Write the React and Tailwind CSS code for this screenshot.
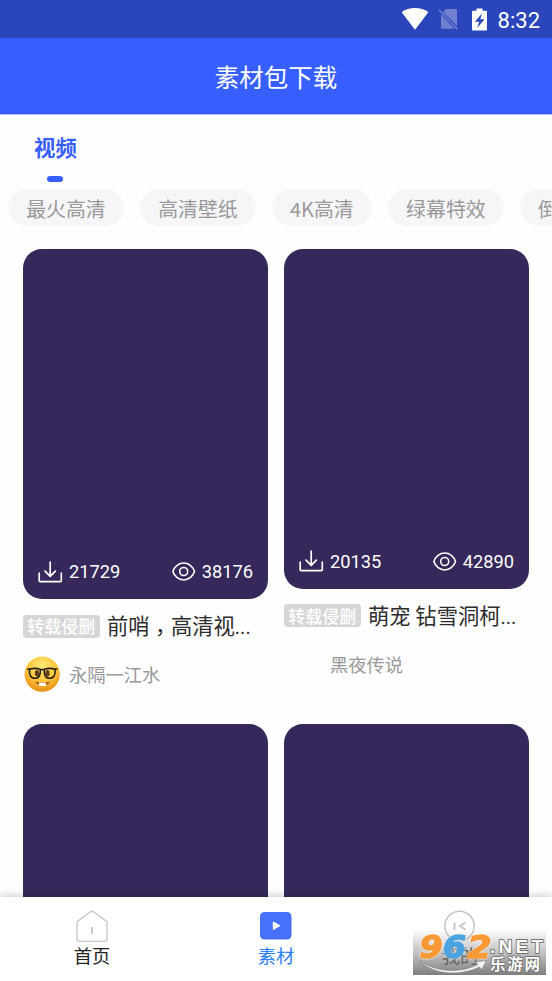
const chips = ['最火高清', '高清壁纸', '4K高清', '绿幕特效', '倒计时'];

function DownloadIcon() {
  return (
    <svg width="25" height="23" viewBox="0 0 25 23" fill="none" stroke="white" strokeWidth="1.7" strokeLinecap="round" strokeLinejoin="round">
      <path d="M12.2 1v14.2M7 10.2l5.2 5.2 5.2-5.2M1.2 12.2v7.4c0 .6.4 1 1 1h20.1c.6 0 1-.4 1-1v-7.4" />
    </svg>
  );
}

function EyeIcon() {
  return (
    <svg width="24" height="20" viewBox="0 0 24 20" fill="none" stroke="white" strokeWidth="1.6">
      <path d="M.9 9.5C2.400 4.300 7 1 11.700 1S21 4.300 22.500 9.500c-1.500 5.200-6.100 8.500-10.800 8.500S2.400 14.700.9 9.500z" />
      <circle cx="11.7" cy="9.5" r="4" />
    </svg>
  );
}

function NerdFace() {
  return (
    <svg width="37" height="37" viewBox="0 0 37 37">
      <defs>
        <radialGradient id="face" cx="50%" cy="28%" r="72%">
          <stop offset="0" stopColor="#ffeb78" />
          <stop offset="0.55" stopColor="#fdc83c" />
          <stop offset="1" stopColor="#e88c13" />
        </radialGradient>
      </defs>
      <circle cx="18.2" cy="18.2" r="17.6" fill="url(#face)" />
      <ellipse cx="13" cy="17.3" rx="2.1" ry="3.2" fill="#633b16" />
      <ellipse cx="23.5" cy="17.3" rx="2.1" ry="3.2" fill="#633b16" />
      <path d="M11 25.5c2.5 5 12.5 5 15 0-4.2 1.8-10.8 1.8-15 0z" fill="#8c4b13" />
      <path d="M15 26.7h6.8v2.8c0 .7-3 .7-3.3 0-.3.7-3.5.7-3.5 0z" fill="white" />
      <g fill="none" stroke="#262019" strokeWidth="1.6">
        <path d="M5.5 13.2c3.8-1.1 7.5-1 10.8.1.5 5.4-1.2 9-5.2 9-4.3 0-6.2-3.6-5.6-9.1z" />
        <path d="M20.3 13.3c3.3-1.1 7-1.2 10.8-.1.6 5.5-1.3 9.1-5.6 9.1-4 0-5.7-3.6-5.2-9z" />
        <path d="M3.2 13.3l2.5-.3M31 13l2.5.3M16 14.2c1.6-1 3-1 4.6 0" />
      </g>
    </svg>
  );
}

function StatusBar() {
  return (
    <div className="flex h-[38px] shrink-0 items-center justify-end bg-[#2b46bb] pr-3">
      <svg width="28" height="22" viewBox="0 0 28 22" className="mr-[9px]">
        <path d="M14 21.7L.7 4.3C8-1.3 20-1.3 27.3 4.3z" fill="white" />
      </svg>
      <svg width="21" height="22" viewBox="0 0 21 22" className="mr-[13px]">
        <path d="M8 1h9.5a1.5 1.5 0 011.5 1.5V18L5 4zM3 6.5L16.5 20.8H4.5A1.5 1.5 0 013 19.3z" fill="#707fd0" />
        <path d="M1 2l18.5 19.2" stroke="#707fd0" strokeWidth="1.5" />
      </svg>
      <svg width="15" height="23" viewBox="0 0 15 23" className="mr-[11px]">
        <path d="M4.5.5h6v2.3H14c.5 0 1 .5 1 1V21.5c0 .6-.5 1-1 1H1c-.5 0-1-.4-1-1V3.8c0-.5.5-1 1-1h3.5z" fill="white" />
        <path d="M10 5.5L2.8 13.8h4.4L5.2 20 12.5 11.3H8.3z" fill="#2b46bb" />
      </svg>
      <span className="mt-[3px] font-[Roboto] text-[22px] leading-[22px] text-white">8:32</span>
    </div>
  );
}

function VideoCover({ downloads, views, className }) {
  return (
    <div className={`flex items-end justify-between rounded-[19px] bg-[#36285a] px-[15px] ${className}`}>
      {downloads && (
        <>
          <div className="mb-[15px] flex h-6 items-center gap-[6px]">
            <DownloadIcon />
            <span className="font-[Roboto] text-[18.3px] text-white">{downloads}</span>
          </div>
          <div className="mb-[15px] flex h-6 items-center gap-[6px]">
            <EyeIcon />
            <span className="font-[Roboto] text-[18.3px] text-white">{views}</span>
          </div>
        </>
      )}
    </div>
  );
}

function VideoCard({ cover, downloads, views, title, avatar, author }) {
  return (
    <div className="w-[245px]">
      <VideoCover downloads={downloads} views={views} className={cover} />
      <div className="mt-3 flex h-[30px] items-center">
        <span className="flex h-[23px] w-[76.5px] shrink-0 items-center justify-center rounded-[4px] bg-[#d6d6d6] text-[17px] font-medium text-white">
          转载侵删
        </span>
        <span className="ml-[7.5px] text-[21.3px] leading-[30px] whitespace-nowrap text-[#2d2d2d]">
          {title}
          <span className="font-[Roboto] text-[20px]">...</span>
        </span>
      </div>
      <div className="mt-[15px] flex h-[37px] items-center pl-px">
        <div className="w-[37px]">{avatar}</div>
        <span className="mt-px ml-2 text-[18.3px] text-[#999]">{author}</span>
      </div>
    </div>
  );
}

function Watermark() {
  return (
    <svg width="133" height="45" viewBox="0 0 133 45" className="absolute right-[6px] bottom-[6px]">
      <defs>
        <linearGradient id="shade" x1="0" y1="0" x2="0" y2="1">
          <stop offset="0" stopColor="#888" stopOpacity="0.02" />
          <stop offset="0.5" stopColor="#858585" stopOpacity="0.5" />
          <stop offset="1" stopColor="#777" stopOpacity="0.95" />
        </linearGradient>
      </defs>
      <rect width="133" height="45" fill="url(#shade)" />
      <path d="M7 30.5c15 12 41 13 58 4l-3-2.500 11.500-1.500-5 9.500-2-3C44 48 17 43 7 30.500z" fill="#f2f2f2" stroke="#777" strokeWidth="0.6" />
      <g
        className="drop-shadow-[0_0_1px_white]"
        fontFamily="DejaVu Sans"
        fontWeight="700"
        fontStyle="italic"
        fontSize="32"
        strokeWidth="1.5"
      >
        <text x="6.500" y="28" textLength="23" lengthAdjust="spacingAndGlyphs" fill="#f79a35" stroke="#f79a35">9</text>
        <text x="30" y="28" textLength="23" lengthAdjust="spacingAndGlyphs" fill="#4ba3e0" stroke="#4ba3e0">6</text>
        <text x="54.500" y="28" textLength="24" lengthAdjust="spacingAndGlyphs" fill="#f79a35" stroke="#f79a35">2</text>
      </g>
      <g fill="white" stroke="#737373" strokeWidth="1.8" strokeLinejoin="round" paintOrder="stroke">
        <text x="77" y="22.500" fontFamily="Liberation Sans" fontWeight="700" fontSize="19" textLength="53" lengthAdjust="spacing">.NET</text>
        <text x="77" y="40" fontFamily="Noto Sans CJK SC" fontWeight="700" fontSize="15.500" textLength="50">乐游网</text>
      </g>
    </svg>
  );
}

function TabBar() {
  return (
    <nav className="relative z-10 grid h-[84px] shrink-0 grid-cols-3 bg-white text-[18.3px] leading-[24px] shadow-[0_-1px_8px_rgba(0,0,0,0.22)]">
      <div className="flex flex-col items-center pt-[13px] text-[#222]">
        <svg width="32" height="33" viewBox="0 0 32 33" fill="none" stroke="#c6c6c6" strokeWidth="1.3" strokeLinejoin="round">
          <path d="M1 12.7c0-.8.3-1.3.9-1.8L14.8 1.4c.8-.6 1.6-.6 2.4 0l12.9 9.5c.6.5.9 1 .9 1.8V29c0 1.5-.9 2.400-2.400 2.400H3.400C1.900 31.400 1 30.500 1 29z" />
          <path d="M16 17v7" strokeWidth="1.8" />
        </svg>
        <span>首页</span>
      </div>
      <div className="flex flex-col items-center pt-[15px] text-[#2b80f5]">
        <svg width="32" height="28" viewBox="0 0 32 28">
          <rect width="31.5" height="27.5" rx="4.5" fill="#4771fb" />
          <path d="M13.5 10.3v6.900l6-3.450z" fill="white" stroke="white" strokeWidth="1.4" strokeLinejoin="round" />
        </svg>
        <span className="mt-[3px]">素材</span>
      </div>
      <div className="flex flex-col items-center pt-[13px] text-[#222]">
        <svg width="32" height="32" viewBox="0 0 32 32" fill="none" stroke="#c6c6c6" strokeWidth="1.5">
          <circle cx="15.5" cy="16" r="14.7" />
          <path d="M10.5 12.5v7.500M21.500 12.500l-5.500 3.500 5.500 3.800" strokeWidth="1.9" />
        </svg>
        <span className="mt-px">我的</span>
      </div>
      <Watermark />
    </nav>
  );
}

export default function App() {
  return (
    <div className="flex h-[981px] w-[552px] flex-col overflow-hidden bg-[#fefefe] font-['Noto_Sans_CJK_SC',sans-serif]">
      <StatusBar />
      <header className="flex h-[77px] shrink-0 items-center justify-center border-b border-[#b0beff] bg-[#375fff] pt-[2px] text-[24.5px] text-white">
        素材包下载
      </header>

      <main className="min-h-0 flex-1 overflow-hidden">
        <div className="ml-[34px] flex h-[74px] w-[43px] flex-col items-center pt-[17px]">
          <span className="text-[21.4px] leading-[30px] font-bold whitespace-nowrap text-[#375fff]">视频</span>
          <span className="mt-[14px] mr-px h-[6px] w-4 rounded-full bg-[#375fff]" />
        </div>

        <div className="flex gap-[16px] overflow-hidden pl-2">
          {chips.map((chip) => (
            <span
              key={chip}
              className="flex h-[37px] shrink-0 items-center rounded-full bg-[#f6f6f8] px-[18.2px] pt-[2px] text-[19.9px] text-[#999]"
            >
              {chip}
            </span>
          ))}
        </div>

        {/* Video feed */}
        <div className="mt-[23px] flex justify-between px-[23px]">
          <VideoCard
            cover="h-[350px]"
            downloads="21729"
            views="38176"
            title={
              <>
                前哨
                <span className="inline-block align-[-6px] font-['Noto_Sans_CJK_TC'] leading-[20px]" lang="zh-TW">
                  ，
                </span>
                高清视
              </>
            }
            avatar={<NerdFace />}
            author="永隔一江水"
          />
          <VideoCard cover="h-[339.5px]" downloads="20135" views="42890" title="萌宠 钻雪洞柯" author="黑夜传说" />
        </div>
        <div className="mt-[31px] flex justify-between px-[23px]">
          <VideoCover className="h-[350px] w-[245px]" />
          <VideoCover className="h-[350px] w-[245px]" />
        </div>
      </main>

      <TabBar />
    </div>
  );
}
